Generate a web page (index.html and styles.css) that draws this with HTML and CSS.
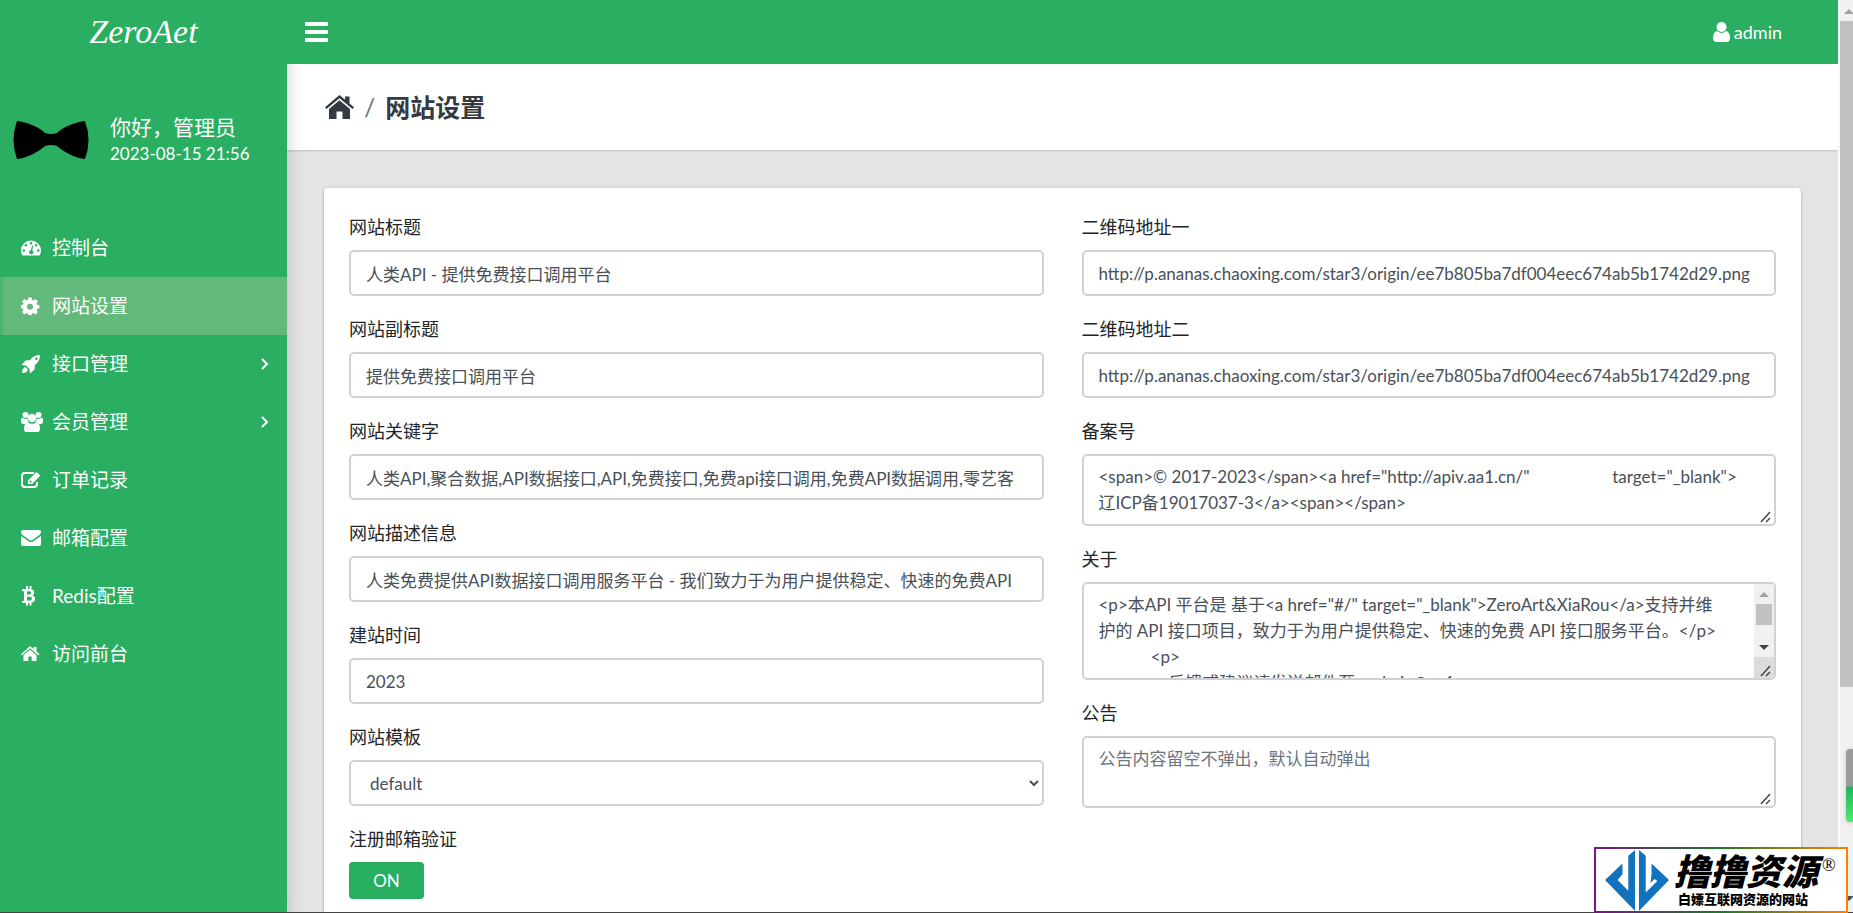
FILE: index.html
```html
<!DOCTYPE html>
<html lang="zh-CN">
<head>
<meta charset="utf-8">
<title>网站设置</title>
<link rel="stylesheet" href="styles.css">
</head>
<body>
<div class="app">
  <aside class="sidebar">
    <a class="brand" href="#">ZeroAet</a>
    <div class="user">
      <svg class="bowtie" viewBox="0 0 76 40" aria-hidden="true"><path d="M4 1C14 2 26 7 32 13Q38 15 44 13C50 7 62 2 72 1Q79 20 72 39C62 38 51 32 44 26Q38 24 32 26C25 32 14 38 4 39Q-3 20 4 1Z"/></svg>
      <div class="user-text">
        <p class="hello">你好，管理员</p>
        <p class="time">2023-08-15 21:56</p>
      </div>
    </div>
    <nav class="menu">
      <a class="item" href="#"><svg class="icon" viewBox="0 0 20 20"><path fill-rule="evenodd" d="M10 2.500A10 10 0 0 0 0 12.500Q0 15.500 1.500 17.500H18.500Q20 15.500 20 12.500A10 10 0 0 0 10 2.500ZM10 4a1.300 1.300 0 1 1 0 2.600a1.300 1.300 0 0 1 0-2.600ZM4.800 6a1.300 1.300 0 1 1 0 2.600a1.300 1.300 0 0 1 0-2.600ZM15.200 6a1.300 1.300 0 1 1 0 2.600a1.300 1.300 0 0 1 0-2.600ZM2.800 11.200a1.300 1.300 0 1 1 0 2.600a1.300 1.300 0 0 1 0-2.600ZM17.200 11.200a1.300 1.300 0 1 1 0 2.600a1.300 1.300 0 0 1 0-2.600ZM11.200 7.500L12.300 7.800L11.200 12.200A2.200 2.200 0 1 1 9.900 12Z"/></svg><span class="name">控制台</span></a>
      <a class="item active" href="#"><svg class="icon" viewBox="0 0 20 20"><path fill-rule="evenodd" d="M7.300 1.500H10.700L11.200 4L12.500 4.500L14.600 3.100L16.900 5.400L15.500 7.500L16 8.800L18.500 9.300V12.200L16 12.700L15.500 14L16.900 16.100L14.600 18.400L12.500 17L11.200 17.500L10.700 19H7.300L6.800 17.500L5.500 17L3.400 18.400L1.100 16.100L2.500 14L2 12.700L0 12.200V9.300L2 8.800L2.500 7.500L1.100 5.400L3.400 3.100L5.500 4.500L6.800 4ZM9 7.700a3 3 0 1 0 0 6a3 3 0 0 0 0-6Z"/></svg><span class="name">网站设置</span></a>
      <a class="item" href="#"><svg class="icon" viewBox="0 0 20 20"><path fill-rule="evenodd" d="M19 1Q13 1 9 6L4.500 6.500L.5 11L5 11.500L8.500 15L9 19.500L13.500 15.500L14 11Q19 7 19 1ZM15.300 3.500a1.300 1.300 0 1 1 0 2.600a1.300 1.300 0 0 1 0-2.600ZM4.500 13Q1 14 1 19Q6 19 7 15.500Z"/></svg><span class="name">接口管理</span><svg class="chevron" viewBox="0 0 8 12"><path d="M1 1l5 5-5 5"/></svg></a>
      <a class="item" href="#"><svg class="icon wide" viewBox="0 0 22 20"><circle cx="4.500" cy="3" r="3"/><circle cx="17.500" cy="3" r="3"/><circle cx="11" cy="6" r="4.200"/><path d="M0 7Q0 5.500 2 6Q4.500 7.500 6.500 6.500Q6.500 9 8 10.500Q5 10.500 4 12H2Q0 12 0 9ZM22 7Q22 5.500 20 6Q17.500 7.500 15.500 6.500Q15.500 9 14 10.500Q17 10.500 18 12H20Q22 12 22 9ZM6.500 10.500Q11 13 15.500 10.500Q19 10.500 19 17Q19 20 16.500 20H5.500Q3 20 3 17Q3 10.500 6.500 10.500Z"/></svg><span class="name">会员管理</span><svg class="chevron" viewBox="0 0 8 12"><path d="M1 1l5 5-5 5"/></svg></a>
      <a class="item" href="#"><svg class="icon" viewBox="0 0 20 20"><path class="line" d="M13 3H4Q1 3 1 6V14Q1 17 4 17H13Q16 17 16 14V12"/><path fill-rule="evenodd" d="M7 14V10.500L15.500 2L19.500 5.500L11 14ZM8.500 11V12.600H10.200L11 11.800L9.300 10.200Z"/></svg><span class="name">订单记录</span></a>
      <a class="item" href="#"><svg class="icon" viewBox="0 0 20 20"><path d="M2 2H18Q20 2 20 4Q20 6 17.500 7.800L11.500 12Q10 13 8.500 12L2.500 7.800Q0 6 0 4Q0 2 2 2ZM0 8L8 13.500Q10 14.700 12 13.500L20 8V16Q20 18 18 18H2Q0 18 0 16Z"/></svg><span class="name">邮箱配置</span></a>
      <a class="item" href="#"><svg class="icon" viewBox="0 0 20 20"><path fill-rule="evenodd" d="M1 3H5V0H7V3H8.500V0H10.500V3.200Q13.500 4 13.300 6.500Q13.300 8.500 11.500 9.400Q14.300 10.200 14 13Q13.700 16.200 10.500 16.700V19.500H8.500V17H7V19.500H5V17H1L1.400 14.800H3V5.200H1ZM6 5.300V8.500H8Q10.200 8.500 10.200 6.900Q10.200 5.300 8 5.300ZM6 10.800V14.600H8Q10.900 14.600 10.900 12.700Q10.900 10.800 8 10.800Z"/></svg><span class="name">Redis配置</span></a>
      <a class="item" href="#"><svg class="icon" viewBox="0 0 20 20"><path d="M9 2L12.500 5V3H15.500V7.500L18.500 10.200L17.500 11.400L9 4.300L.8 11.400L0 10.200ZM9 5.700L15.500 11.200V17H10.700V12.500H7.300V17H2.500V11.200Z"/></svg><span class="name">访问前台</span></a>
    </nav>
  </aside>

  <div class="page">
    <header class="topbar">
      <button class="toggle" type="button" aria-label="菜单"><svg viewBox="0 0 23 20"><path d="M0 0H23V4H0ZM0 8H23V12H0ZM0 16H23V20H0Z"/></svg></button>
      <a class="account" href="#"><svg viewBox="0 0 17 20"><circle cx="8.500" cy="5" r="5"/><path d="M4 9Q8.500 13 13 9Q17 10 17 16Q17 20 13.500 20H3.500Q0 20 0 16Q0 10 4 9Z"/></svg>admin</a>
    </header>
    <div class="title">
      <a href="#" aria-label="首页"><svg class="home" viewBox="0 0 29 24"><path d="M14.500 0L20 4.700V1.500H24.500V8.500L29 12.300L27.500 14L14.500 3.200L1.500 14L0 12.300ZM14.500 5.200L25 14V24H17.500V16.500H11.500V24H4V14Z"/></svg></a>
      <span class="slash">/</span>
      <h1>网站设置</h1>
    </div>
    <main class="content">
      <form class="card">
        <div class="column">
          <div class="field"><label for="f1">网站标题</label><input class="control" id="f1" type="text" value="人类API - 提供免费接口调用平台"></div>
          <div class="field"><label for="f2">网站副标题</label><input class="control" id="f2" type="text" value="提供免费接口调用平台"></div>
          <div class="field"><label for="f3">网站关键字</label><input class="control" id="f3" type="text" value="人类API,聚合数据,API数据接口,API,免费接口,免费api接口调用,免费API数据调用,零艺客"></div>
          <div class="field"><label for="f4">网站描述信息</label><input class="control" id="f4" type="text" value="人类免费提供API数据接口调用服务平台 - 我们致力于为用户提供稳定、快速的免费API"></div>
          <div class="field"><label for="f5">建站时间</label><input class="control" id="f5" type="text" value="2023"></div>
          <div class="field"><label for="f6">网站模板</label><select class="control" id="f6"><option>default</option></select></div>
          <div class="field"><label for="f7">注册邮箱验证</label><button class="switch" id="f7" type="button">ON</button></div>
        </div>
        <div class="column">
          <div class="field"><label for="g1">二维码地址一</label><input class="control" id="g1" type="text" value="http://p.ananas.chaoxing.com/star3/origin/ee7b805ba7df004eec674ab5b1742d29.png"></div>
          <div class="field"><label for="g2">二维码地址二</label><input class="control" id="g2" type="text" value="http://p.ananas.chaoxing.com/star3/origin/ee7b805ba7df004eec674ab5b1742d29.png"></div>
          <div class="field"><label for="g3">备案号</label><div class="area-box"><textarea class="control area" id="g3">&lt;span&gt;© 2017-2023&lt;/span&gt;&lt;a href="http://apiv.aa1.cn/"                   target="_blank"&gt;
辽ICP备19017037-3&lt;/a&gt;&lt;span&gt;&lt;/span&gt;</textarea><svg class="grip" viewBox="0 0 12 12" aria-hidden="true"><path d="M1 11L10 1M6 11L10 7"/></svg></div></div>
          <div class="field"><label for="g4">关于</label><div class="area-box"><textarea class="control area tall" id="g4">&lt;p&gt;本API 平台是 基于&lt;a href="#/" target="_blank"&gt;ZeroArt&amp;XiaRou&lt;/a&gt;支持并维
护的 API 接口项目，致力于为用户提供稳定、快速的免费 API 接口服务平台。&lt;/p&gt;
            &lt;p&gt;
                反馈或建议请发送邮件至 : admin@aa1.cn
              &lt;/p&gt;
</textarea><div class="area-scroll" aria-hidden="true"><svg class="up" viewBox="0 0 20 20"><path d="M5 13L10 8L15 13Z"/></svg><div class="area-thumb"></div><svg class="down" viewBox="0 0 20 20"><path d="M5 8L10 13L15 8Z"/></svg><div class="corner"></div></div><svg class="grip" viewBox="0 0 12 12" aria-hidden="true"><path d="M1 11L10 1M6 11L10 7"/></svg></div></div>
          <div class="field"><label for="g5">公告</label><div class="area-box"><textarea class="control area" id="g5" placeholder="公告内容留空不弹出，默认自动弹出"></textarea><svg class="grip" viewBox="0 0 12 12" aria-hidden="true"><path d="M1 11L10 1M6 11L10 7"/></svg></div></div>
        </div>
      </form>
    </main>
  </div>
  <div class="scrollbar" aria-hidden="true"><svg viewBox="0 0 13 21"><path d="M4 14L9 9L14 14Z"/></svg><div class="thumb"></div><svg class="last" viewBox="0 0 13 21"><path d="M4 5H14L9 10Z"/></svg></div>
</div>
<div class="meter" aria-hidden="true"></div>
<div class="watermark">
  <svg class="mark" viewBox="0 0 66 64" aria-hidden="true"><path d="M24 7L31 1V64L0 32L18 15V26L13 32L24 43ZM42 7L35 1V64L66 32L48 15V26L47 35L51 31L54 33L42 45Z"/></svg>
  <div class="mark-text"><p class="big">撸撸资源</p><p class="small">白嫖互联网资源的网站</p></div>
  <span class="reg">®</span>
</div>
</body>
</html>
```
FILE: styles.css
```css
* { box-sizing: border-box; }
body {
  margin: 0;
  height: 100vh;
  overflow: hidden;
  background: #e4e4e4;
  color: #212529;
  font: 17px/26px Lato, "Noto Sans CJK SC", sans-serif;
}
p, h1 { margin: 0; }
a { color: inherit; text-decoration: none; }
.app {
  display: grid;
  grid-template-columns: 287px 1fr 15px;
  grid-template-rows: 100%;
  height: 100vh;
  overflow: hidden;
  border-bottom: 1px solid #444;
}

.sidebar {
  position: relative;
  z-index: 2;
  background: #2aae61;
  color: #fff;
  box-shadow: 0 8px 17px rgba(0, 0, 0, .2);
}
.brand {
  display: flex;
  align-items: center;
  justify-content: center;
  height: 64px;
  font: italic 34px/40px "Liberation Serif", serif;
}
.user {
  display: flex;
  align-items: center;
  gap: 21px;
  height: 155px;
  padding: 0 13px 4px;
}
.bowtie { width: 76px; height: 40px; flex: none; }
.hello { font-size: 21px; line-height: 28px; }
.item {
  display: flex;
  align-items: center;
  height: 58px;
  padding: 0 18px;
  border-left: 3px solid transparent;
  font-size: 19px;
}
.item.active { background: #63b97b; border-left-color: #4ab36e; }
.icon { width: 20px; height: 20px; margin-right: 11px; overflow: visible; fill: #fff; }
.icon.wide { width: 22px; margin-right: 9px; }
.icon .line { fill: none; stroke: #fff; stroke-width: 2; }
.name { flex: 1; }
.chevron { width: 8px; height: 12px; fill: none; stroke: #fff; stroke-width: 2; }

.page { display: flex; flex-direction: column; min-width: 0; }
.topbar {
  display: flex;
  position: relative;
  z-index: 3;
  flex: none;
  align-items: center;
  justify-content: space-between;
  height: 64px;
  padding: 0 56px 0 18px;
  background: #2aae61;
  color: #fff;
}
.toggle { padding: 0; border: 0; background: none; }
.toggle svg { display: block; width: 23px; height: 20px; fill: #fff; }
.account { display: flex; align-items: center; gap: 4px; font-size: 18px; }
.account svg { width: 17px; height: 20px; fill: #fff; }
.title {
  display: flex;
  flex: none;
  align-items: center;
  gap: 10px;
  height: 86px;
  padding: 0 38px;
  background: #fff;
  box-shadow: 0 1px 2px rgba(0, 0, 0, .15);
  color: #343a40;
}
.home { display: block; width: 29px; height: 24px; fill: #343a40; }
.slash { color: #6c757d; font-size: 25px; }
h1 { font-size: 25px; line-height: 32px; }
.content { padding: 38px 37px 0; }
.card {
  display: grid;
  grid-template-columns: 1fr 1fr;
  gap: 38px;
  padding: 26px 25px;
  border-radius: 4px;
  background: #fff;
  box-shadow: 0 2px 3px rgba(0, 0, 0, .2), 0 0 3px rgba(0, 0, 0, .12);
}
.column { display: flex; flex-direction: column; gap: 20px; min-width: 0; }
.field { display: flex; flex-direction: column; align-items: flex-start; gap: 10px; }
label { font-size: 18px; }
.control {
  display: block;
  width: 100%;
  height: 46px;
  padding: 0 15px;
  border: 2px solid #ced2d6;
  border-radius: 5px;
  background: #fff;
  color: #495057;
  font: inherit;
}
.area-box { position: relative; width: 100%; }
.area { height: 72px; padding: 8px 15px; overflow: hidden; resize: none; white-space: pre; }
.area.tall { height: 98px; }
.area::placeholder { color: #6c757d; }
.grip {
  position: absolute;
  right: 4px;
  bottom: 3px;
  width: 12px;
  height: 12px;
  fill: none;
  stroke: #444;
  stroke-width: 1.5;
}
.area-scroll {
  position: absolute;
  top: 2px;
  right: 2px;
  bottom: 2px;
  display: flex;
  flex-direction: column;
  width: 20px;
  background: #f1f1f1;
}
.area-scroll svg { width: 20px; height: 20px; }
.up { fill: #a3a3a3; }
.down { margin-top: auto; fill: #444; }
.area-thumb { height: 21px; margin: 0 2px; background: #c1c1c1; }
.corner { height: 21px; background: #dcdcdc; }
.switch {
  width: 75px;
  height: 37px;
  border: 0;
  border-radius: 4px;
  background: #28ae60;
  color: #fff;
  font: inherit;
}

.scrollbar {
  display: flex;
  flex-direction: column;
  border-left: 2px solid #fafafa;
  background: #f1f1f1;
}
.scrollbar svg { display: block; flex: none; width: 13px; height: 21px; fill: #a3a3a3; }
.scrollbar .last { margin-top: auto; fill: #505050; }
.thumb { height: 73%; background: #c1c1c1; }
.meter {
  position: absolute;
  top: 749px;
  right: 0;
  width: 7px;
  height: 73px;
  border-radius: 4px 0 0 4px;
  background: linear-gradient(#9c9c9c 0 37px, #22b45c 38px, #52e86c);
  box-shadow: 0 1px 4px rgba(0, 0, 0, .2);
}
.watermark {
  position: absolute;
  right: 5px;
  bottom: 0;
  z-index: 3;
  display: flex;
  align-items: center;
  width: 254px;
  height: 66px;
  padding-left: 8px;
  border: 2px solid;
  border-image: linear-gradient(90deg, #7b1480, #1b7a2c 50%, #ff8000) 1;
  background: #fff;
  color: #000;
}
.mark { width: 66px; height: 62px; flex: none; fill: #1272bd; }
.mark-text { margin-left: 4px; }
.big { font-size: 36px; line-height: 38px; font-weight: 900; font-style: italic; }
.small { padding-left: 4px; font-size: 13px; line-height: 18px; font-weight: 900; }
.reg { align-self: flex-start; padding: 4px 0 0 4px; font: 18px/24px "Liberation Serif", serif; }
```
